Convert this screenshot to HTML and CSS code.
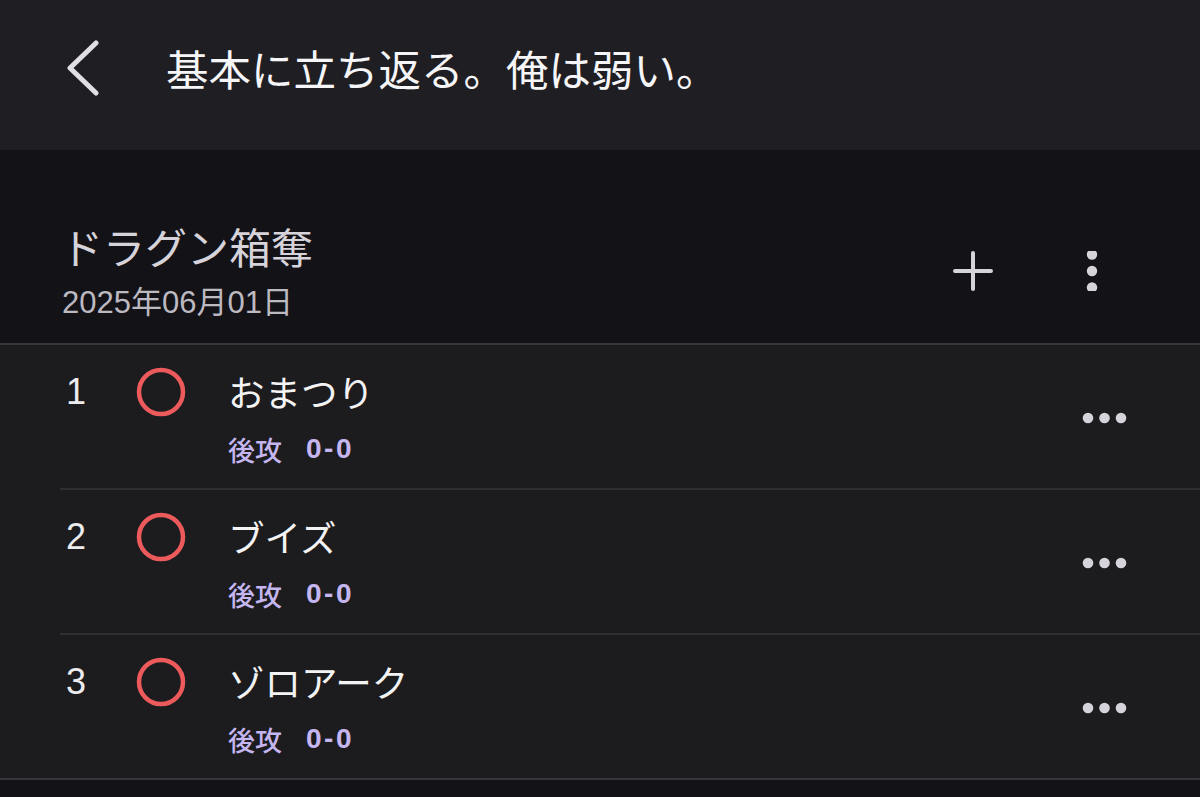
FILE: index.html
```html
<!DOCTYPE html>
<html lang="ja">
<head>
<meta charset="utf-8">
<title>基本に立ち返る。俺は弱い。</title>
<link rel="stylesheet" href="styles.css">
</head>
<body>
<div class="app">
  <header class="topbar">
    <button class="back" aria-label="戻る">
      <svg width="40" height="56" viewBox="0 0 40 56"><path d="M32 3 L6 28 L32 53" fill="none" stroke="#e2dee6" stroke-width="5" stroke-linecap="round" stroke-linejoin="round"/></svg>
    </button>
    <h1 class="title">基本に立ち返る。俺は弱い。</h1>
  </header>

  <section class="deck">
    <div class="deck-info">
      <div class="deck-name">ドラグン箱奪</div>
      <div class="deck-date">2025年06月01日</div>
    </div>
    <div class="actions">
      <span class="icon plus">
        <svg width="40" height="40" viewBox="0 0 40 40"><path d="M20 2 V38 M2 20 H38" stroke="#d6d3db" stroke-width="4" stroke-linecap="round"/></svg>
      </span>
      <span class="icon kebab">
        <svg width="20" height="40" viewBox="0 0 20 40"><circle cx="10" cy="3.5" r="5.2" fill="#d6d3db"/><circle cx="10" cy="20" r="5.2" fill="#d6d3db"/><circle cx="10" cy="36.5" r="5.2" fill="#d6d3db"/></svg>
      </span>
    </div>
  </section>

  <ul class="list">
    <li class="row">
      <span class="num">1</span>
      <span class="mark"><svg width="50" height="50" viewBox="0 0 50 50"><circle cx="25" cy="25" r="22" fill="none" stroke="#ec5a5c" stroke-width="4.5"/></svg></span>
      <div class="text">
        <div class="name">おまつり</div>
        <div class="sub"><span class="turn">後攻</span><span class="score">0-0</span></div>
      </div>
      <span class="more"><svg width="46" height="12" viewBox="0 0 46 12"><circle cx="6" cy="6" r="5.3" fill="#d6d3db"/><circle cx="22.5" cy="6" r="5.3" fill="#d6d3db"/><circle cx="39" cy="6" r="5.3" fill="#d6d3db"/></svg></span>
    </li>
    <li class="row">
      <span class="num">2</span>
      <span class="mark"><svg width="50" height="50" viewBox="0 0 50 50"><circle cx="25" cy="25" r="22" fill="none" stroke="#ec5a5c" stroke-width="4.5"/></svg></span>
      <div class="text">
        <div class="name">ブイズ</div>
        <div class="sub"><span class="turn">後攻</span><span class="score">0-0</span></div>
      </div>
      <span class="more"><svg width="46" height="12" viewBox="0 0 46 12"><circle cx="6" cy="6" r="5.3" fill="#d6d3db"/><circle cx="22.5" cy="6" r="5.3" fill="#d6d3db"/><circle cx="39" cy="6" r="5.3" fill="#d6d3db"/></svg></span>
    </li>
    <li class="row">
      <span class="num">3</span>
      <span class="mark"><svg width="50" height="50" viewBox="0 0 50 50"><circle cx="25" cy="25" r="22" fill="none" stroke="#ec5a5c" stroke-width="4.5"/></svg></span>
      <div class="text">
        <div class="name">ゾロアーク</div>
        <div class="sub"><span class="turn">後攻</span><span class="score">0-0</span></div>
      </div>
      <span class="more"><svg width="46" height="12" viewBox="0 0 46 12"><circle cx="6" cy="6" r="5.3" fill="#d6d3db"/><circle cx="22.5" cy="6" r="5.3" fill="#d6d3db"/><circle cx="39" cy="6" r="5.3" fill="#d6d3db"/></svg></span>
    </li>
  </ul>
</div>
</body>
</html>
```

FILE: styles.css
```css
* { box-sizing: border-box; }
html, body {
  margin: 0;
  padding: 0;
  background: #131217;
}
body {
  font-family: "Liberation Sans", "Noto Sans CJK JP", sans-serif;
  width: 1200px;
  height: 797px;
  overflow: hidden;
}
.app {
  display: flex;
  flex-direction: column;
}

/* top bar */
.topbar {
  height: 150px;
  background: #1f1f23;
  display: flex;
  align-items: center;
  padding: 0 0 14px 64px;
}
.back {
  display: flex;
  background: none;
  border: 0;
  padding: 0;
  width: 40px;
  height: 56px;
}
.title {
  margin: 0 0 0 62px;
  font-family: "Noto Sans CJK JP", sans-serif;
  font-weight: 400;
  font-size: 42.5px;
  line-height: 56px;
  color: #f6f5f8;
}

/* deck header */
.deck {
  height: 195px;
  background: #131217;
  border-bottom: 2px solid #36353a;
  display: flex;
  padding: 68px 98px 0 62px;
}
.deck-info {
  flex: 1;
  display: flex;
  flex-direction: column;
}
.deck-name {
  font-family: "Noto Sans CJK JP", sans-serif;
  font-size: 42px;
  line-height: 56px;
  color: #d6d3da;
  margin-left: -1px;
}
.deck-date {
  font-size: 31px;
  line-height: 58px;
  color: #bcb9c1;
}
.actions {
  display: flex;
  align-items: center;
  gap: 89px;
  height: 40px;
  margin-top: 33px;
}
.icon { display: flex; }

/* list */
.list {
  list-style: none;
  margin: 0;
  padding: 0;
  background: #1c1c1f;
  border-bottom: 2px solid #36353a;
}
.row {
  height: 145px;
  margin-left: 60px;
  padding: 23px 72px 0 6px;
  display: flex;
  align-items: flex-start;
  border-bottom: 2px solid #2f2e33;
}
.row:last-child {
  border-bottom: none;
  height: 143px;
}
.num {
  width: 71px;
  font-size: 36px;
  line-height: 48px;
  color: #ececee;
}
.mark {
  display: flex;
  width: 50px;
  height: 48px;
  align-items: center;
  margin-left: -1px;
}
.text {
  margin-left: 42px;
  display: flex;
  flex-direction: column;
  flex: 1;
}
.name {
  font-family: "Noto Sans CJK JP", sans-serif;
  font-size: 36.5px;
  line-height: 48px;
  color: #f3f3f4;
}
.sub {
  margin-top: 16px;
  display: flex;
  align-items: center;
  gap: 24px;
  height: 34px;
  color: #c5b6f0;
}
.turn {
  font-family: "Noto Sans CJK JP", sans-serif;
  font-size: 27px;
  font-weight: 500;
}
.score {
  font-size: 28px;
  font-weight: 700;
  letter-spacing: 2.5px;
}
.more {
  display: flex;
  align-self: center;
  margin-top: -21px;
}
```
